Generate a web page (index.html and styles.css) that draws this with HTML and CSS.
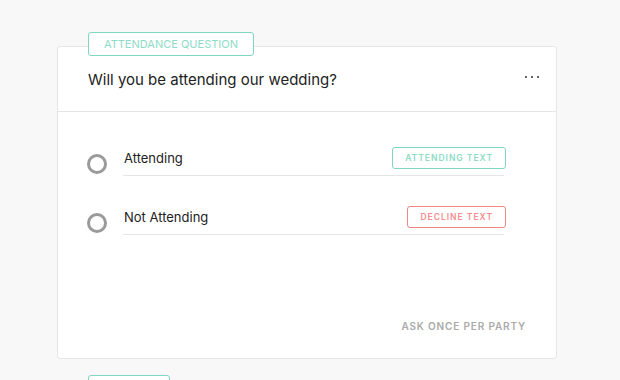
FILE: index.html
```html
<!doctype html>
<html>
<head>
<meta charset="utf-8">
<title>Attendance question</title>
<link rel="stylesheet" href="styles.css">
</head>
<body>
<div class="wrap">
    <div class="card">
        <span class="tag">ATTENDANCE QUESTION</span>
        <div class="cardHead">
            <p class="question">Will you be attending our wedding?</p>
            <span class="more"><i></i><i></i><i></i></span>
        </div>
        <div class="cardBody">
            <div class="option">
                <span class="radio"></span>
                <div class="field">
                    <span class="label">Attending</span>
                    <button class="textBtn yes" type="button">ATTENDING TEXT</button>
                </div>
            </div>
            <div class="option">
                <span class="radio"></span>
                <div class="field">
                    <span class="label">Not Attending</span>
                    <button class="textBtn no" type="button">DECLINE TEXT</button>
                </div>
            </div>
            <div class="askOnce">ASK ONCE PER PARTY</div>
        </div>
    </div>
    <div class="card next">
        <span class="tag">&nbsp;</span>
    </div>
</div>
</body>
</html>
```
FILE: styles.css
```css
*{ margin:0; padding:0; box-sizing:border-box}
html,body{ height:100%; overflow:hidden}
body{ background:#f8f8f8; font-family:Inter,"Liberation Sans",sans-serif; color:#222}
.wrap{ padding:46px 0 0 57px}
.card{ position:relative; width:500px; background:#fff; border:1px solid #e6e6e6; border-radius:3px}
.card.next{ margin-top:30px; height:60px}
.tag{ position:absolute; top:-15px; left:30px; height:24px; padding:0 15px; background:#fff; border:1px solid #80d6c0; border-radius:3px; color:#8ddcc7; font-size:11px; line-height:22px}
.card.next .tag{ width:82px}
.cardHead{ height:65px; padding:0 30px; border-bottom:1px solid #e6e6e6; display:flex; align-items:center; justify-content:space-between}
.question{ font-size:15px}
.more{ display:flex; gap:4px; margin-right:-13px; margin-top:-5px}
.more i{ width:2px; height:2px; background:#666}
.cardBody{ padding:29px 52px 25px 29px}
.option{ display:flex; align-items:flex-end; margin-bottom:24px}
.radio{ width:20px; height:20px; border:3px solid #9a9a9a; border-radius:50%; margin:0 16px 2px 0; flex-shrink:0}
.field{ flex:1; display:flex; align-items:center; justify-content:space-between; padding:6px 0; border-bottom:1px solid #e6e6e6}
.label{ font-size:13px; padding-left:1px}
.textBtn{ height:22px; padding:0 12px; background:#fff; border-radius:3px; font-family:inherit; font-size:8.5px; font-weight:600; letter-spacing:1px; margin-right:-2px}
.textBtn.yes{ border:1px solid #80d6c0; color:#8ddcc7}
.textBtn.no{ border:1px solid #f28585; color:#f58e8e}
.askOnce{ margin:84px -22px 0 0; text-align:right; font-size:10px; font-weight:600; letter-spacing:0.85px; color:#aaa; line-height:14px}
```
